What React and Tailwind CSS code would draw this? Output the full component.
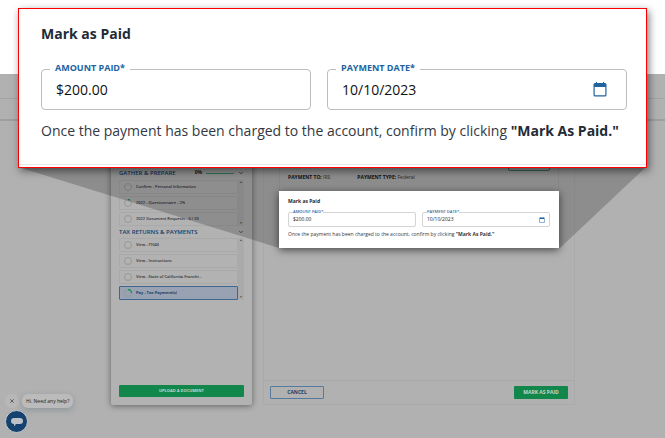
import { ChevronDown, X } from 'lucide-react';

const prepareSteps = [
  { label: 'Confirm - Personal Information', progress: 0 },
  { label: '2022 - Questionnaire - 2%', progress: 8 },
  { label: '2022 Document Requests - 0 / 33', progress: 0 },
];

const returnSteps = [
  { label: 'View - f1040', progress: 0 },
  { label: 'View - Instructions', progress: 0 },
  { label: 'View - State of California Franchi...', progress: 0 },
  { label: 'Pay - Tax Payment(s)', progress: 25, selected: true },
];

const CalendarIcon = ({ className }) => (
  <svg viewBox="0 0 14 15" className={className} aria-hidden="true">
    <path
      fill="currentColor"
      fillRule="evenodd"
      d="M2 1h1V0h1v1h6V0h1v1h1a1.500 1.500 0 0 1 1.500 1.500v10.500a1.500 1.500 0 0 1-1.500 1.500H2A1.500 1.500 0 0 1 .5 13V2.500A1.500 1.500 0 0 1 2 1Zm-.3 4v8.300h10.600V5Z"
    />
  </svg>
);

const ProgressRing = ({ value }) => (
  <svg viewBox="0 0 16 16" className="size-2 shrink-0" aria-hidden="true">
    <g transform="rotate(-90 8 8)" fill="none">
      <circle cx="8" cy="8" r="7" stroke="#989898" strokeWidth="2" />
      {value ? (
        <circle
          cx="8"
          cy="8"
          r="7"
          stroke="#12924f"
          strokeWidth="2.500"
          pathLength="100"
          strokeDasharray={`${value} 100`}
        />
      ) : null}
    </g>
  </svg>
);

const StepList = ({ steps }) => (
  <div className="flex">
    <ul className="flex min-w-0 flex-1 flex-col gap-0.5">
      {steps.map((step) => (
        <li key={step.label}>
          <button
            type="button"
            className={
              step.selected
                ? 'flex h-3.5 w-full items-center gap-1 rounded-[1px] border border-[#3d6690] bg-[#98a2b3] px-1 text-[4px] font-bold text-[#173f69]'
                : 'flex h-3.5 w-full items-center gap-1 rounded-[1px] border border-[#a9a9a9] px-1 text-[4px] font-semibold text-[#2b2f36]'
            }
          >
            <ProgressRing value={step.progress} />
            <span className="truncate">{step.label}</span>
          </button>
        </li>
      ))}
    </ul>
    <div className="flex w-1.5 flex-col justify-between bg-[#aaaaaa] text-center text-[3px] leading-[5px] text-[#444444]">
      <span>▲</span>
      <span>▼</span>
    </div>
  </div>
);

const PaymentField = ({ id, label, value, calendar, compact }) => (
  <div
    className={
      compact
        ? 'relative flex h-[15px] flex-1 items-center rounded-[2px] border border-[#d4d4d4] px-1'
        : 'relative flex h-[41px] items-center rounded border border-[#bdbdbd] px-3.5'
    }
  >
    <label
      htmlFor={id}
      className={
        compact
          ? 'absolute -top-1 left-1 bg-white text-[4px] leading-[6px] font-semibold text-[#2566a3]'
          : 'absolute -top-2 left-2 bg-white px-[5px] text-[9px] leading-3 font-bold text-[#21639f]'
      }
    >
      {label}
    </label>
    <input
      id={id}
      type="text"
      defaultValue={value}
      className={
        compact
          ? 'w-full min-w-0 text-[5px] text-[#222222] outline-none'
          : 'w-full min-w-0 text-sm text-[#111111] outline-none'
      }
    />
    {calendar ? (
      <button type="button" aria-label="Choose date" className="shrink-0 text-[#21639f]">
        <CalendarIcon className={compact ? 'size-1.5' : 'mr-[5px] h-[15px] w-3.5'} />
      </button>
    ) : null}
  </div>
);

const Sidebar = () => (
  <aside className="flex w-[141px] flex-col rounded-[2px] bg-[#b2b2b2] px-2 pt-8 pb-2 shadow-[0_1px_6px_rgba(0,0,0,0.45)]">
    <div className="flex h-3 items-center pb-0.5 text-[6px] font-semibold text-[#123e69]">
      <h2 className="flex-1">GATHER &amp; PREPARE</h2>
      <span className="text-[5px] font-bold text-[#222222]">0%</span>
      <span className="mx-1 h-px w-7 bg-[#3f8f68]" />
      <ChevronDown className="size-1.5 text-[#333333]" strokeWidth={3} />
    </div>
    <StepList steps={prepareSteps} />
    <div className="flex h-3 items-center justify-between text-[6px] font-semibold text-[#123e69]">
      <h2>TAX RETURNS &amp; PAYMENTS</h2>
      <ChevronDown className="size-1.5 text-[#333333]" strokeWidth={3} />
    </div>
    <StepList steps={returnSteps} />
    <button
      type="button"
      className="mt-auto h-3 rounded-[1px] bg-[#12874c] text-[4px] font-bold text-[#c6d5cc]"
    >
      UPLOAD A DOCUMENT
    </button>
  </aside>
);

const PaymentPanel = () => (
  <main className="flex min-w-0 flex-1 flex-col rounded-[2px] border border-[#aaaaaa]">
    <div className="mx-[15px] mt-3 border-x border-[#a8a8a8]">
      <div className="flex h-[22px] items-end justify-end px-2">
        <button type="button" aria-label="Details" className="h-3 w-[42px] rounded-[2px] border border-[#417d74]" />
      </div>
      <div className="flex h-5 gap-[27px] px-2 pt-[3px] text-[5px] text-[#333333]">
        <p>
          <b className="text-[#151515]">PAYMENT TO:</b> IRS
        </p>
        <p>
          <b className="text-[#151515]">PAYMENT TYPE:</b> Federal
        </p>
      </div>
    </div>
    <section className="relative z-20 mx-[15px] h-[57px] bg-white px-[9px] pt-1.5 shadow-[0_2px_8px_rgba(0,0,0,0.6)]">
      <h3 className="text-[5px] leading-2 font-bold text-[#222831]">Mark as Paid</h3>
      <div className="mt-[7px] flex gap-1.5">
        <PaymentField id="amount" label="AMOUNT PAID*" value="$200.00" compact />
        <PaymentField id="date" label="PAYMENT DATE*" value="10/10/2023" calendar compact />
      </div>
      <p className="mt-[3px] text-[5px] leading-2 whitespace-nowrap text-[#333842]">
        Once the payment has been charged to the account, confirm by clicking <b>"Mark As Paid."</b>
      </p>
    </section>
    <footer className="mt-auto flex h-6 items-center justify-between border-t border-[#a8a8a8] px-1.5 text-[5px] font-bold">
      <button type="button" className="h-[13px] w-[54px] rounded-[1px] border border-[#557a9d] text-[#173f69]">
        CANCEL
      </button>
      <button type="button" className="h-[13px] w-[54px] rounded-[1px] bg-[#12874c] text-[#c6d5cc]">
        MARK AS PAID
      </button>
    </footer>
  </main>
);

const Callout = () => (
  <section className="absolute inset-x-[18px] top-2 z-30 h-40 border border-[#ff0000] bg-white px-[22px] pt-[15px] shadow-[2px_3px_8px_rgba(0,0,0,0.5)]">
    <h2 className="text-sm leading-5 font-bold text-[#222b36]">Mark as Paid</h2>
    <div className="mt-[25px] -mr-[3px] grid grid-cols-[9fr_10fr] gap-4">
      <PaymentField id="amount-large" label="AMOUNT PAID*" value="$200.00" />
      <PaymentField id="date-large" label="PAYMENT DATE*" value="10/10/2023" calendar />
    </div>
    <p className="mt-[11px] text-sm leading-5 whitespace-nowrap text-[#333842]">
      Once the payment has been charged to the account, confirm by clicking{' '}
      <b className="text-[#222b36]">"Mark As Paid."</b>
    </p>
    <div className="absolute inset-x-0 bottom-0.5 h-px bg-[#e6eaeb]" />
  </section>
);

const HelpChat = () => (
  <div className="absolute bottom-[5px] left-[5px]">
    <div className="mb-0.5 flex items-center gap-[3px]">
      <button
        type="button"
        aria-label="Dismiss"
        className="flex size-3.5 items-center justify-center rounded-full bg-[#b8b8b8] text-[#444444]"
      >
        <X className="size-1.5" strokeWidth={3} />
      </button>
      <p className="rounded-md bg-[#bbbbbb] px-1 text-[5px] leading-[14px] text-[#222222] shadow-[0_2px_6px_rgba(60,90,100,0.3)]">
        Hi. Need any help?
      </p>
    </div>
    <button
      type="button"
      aria-label="Open chat"
      className="flex size-[23px] items-center justify-center rounded-full border border-[#c5ccd1] bg-[#15426f]"
    >
      <svg viewBox="0 0 12 10" className="h-2.5 w-3">
        <path fill="#bcc2c8" d="M3 1h6a2.500 2.500 0 0 1 0 6H5L3 9.500V7a3 3 0 0 1 0-6Z" />
      </svg>
    </button>
  </div>
);

export default function App() {
  return (
    <div className="relative flex min-h-screen flex-col overflow-hidden bg-white pt-[74px] font-['Open_Sans',sans-serif]">
      <div className="flex flex-1 flex-col bg-[#b1b1b1]">
        <header className="h-[25px] border-b border-[#a3a3a3]" />
        <nav className="h-[22px] border-b-2 border-[#9e9e9e]" />
        <div className="flex flex-1 gap-[11px] pt-[15px] pr-[90px] pb-[33px] pl-[111px]">
          <Sidebar />
          <PaymentPanel />
        </div>
      </div>
      {/* shaded cone between the small panel and its enlarged copy */}
      <svg
        viewBox="0 0 665 438"
        preserveAspectRatio="none"
        className="pointer-events-none absolute inset-0 z-10 size-full"
        aria-hidden="true"
      >
        <path d="M18 167 279 248H560L646 167Z" fill="#000000" fillOpacity="0.2" />
      </svg>
      <HelpChat />
      <Callout />
    </div>
  );
}
